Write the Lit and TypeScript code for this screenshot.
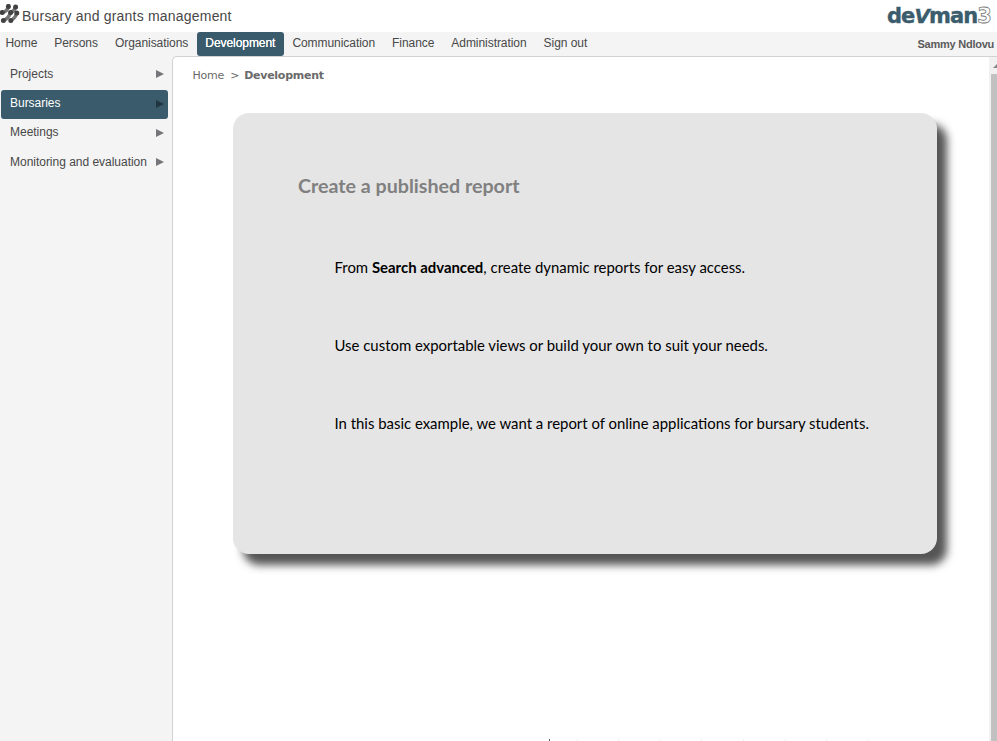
import { LitElement, html, css, svg } from "lit";
import { customElement, property } from "lit/decorators.js";
import { classMap } from "lit/directives/class-map.js";

@customElement("brand-mark")
class BrandMark extends LitElement {
  static styles = css`
    :host { display: block; width: 20px; height: 20px; }
    svg { display: block; }
    path { fill: none; stroke: #757575; stroke-width: 3.4; }
    circle { fill: #414141; }
  `;
  render() {
    const dots = [[8.4, 6.4], [15.6, 7], [2.2, 12.6], [10.6, 12.6], [16.8, 13], [3.4, 20.4], [10.8, 20.6]];
    const links = ["M8.4 6.4Q7.4 11.6 2.2 12.6", "M15.6 7Q14.4 11.2 10.6 12.6Q8.6 18.4 3.4 20.4", "M16.8 13Q15.6 17.8 10.8 20.6"];
    return html`<svg width="20" height="20" viewBox="0 4 20 20">
      ${links.map((d) => svg`<path d=${d} />`)}
      ${dots.map((d) => svg`<circle cx=${d[0]} cy=${d[1]} r="2.5"/>`)}
    </svg>`;
  }
}

@customElement("side-item")
class SideItem extends LitElement {
  @property() label = "";
  @property({ type: Boolean }) active = false;
  static styles = css`
    :host { display: block; }
    .row { display: flex; align-items: center; justify-content: space-between; box-sizing: border-box;
      height: 29.4px; margin: 0 4px 0 1px; padding: 0 4px 3px 9px; border-radius: 3px; color: #484848; letter-spacing: -.02px; }
    .active { background: #395b6b; color: #fff; }
    .arrow { width: 0; height: 0; margin-top: 1px; border: 4px solid transparent; border-left: 8px solid #77757a; border-right: 0; }
    .active .arrow { border-left-color: #203540; }
  `;
  render() {
    return html`<div class=${classMap({ row: true, active: this.active })}><span>${this.label}</span><span class="arrow"></span></div>`;
  }
}

@customElement("app-root")
class AppRoot extends LitElement {
  static styles = css`
    :host { display: flex; flex-direction: column; height: 741px; overflow: hidden; background: #f4f4f4;
      font: 12px "Liberation Sans", Arial, sans-serif; color: #484848; }
    .top { height: 32px; background: #fff; display: flex; justify-content: space-between; box-sizing: border-box; flex: none; }
    .title { display: flex; padding-top: 4px; gap: 2px; }
    .title span { font-size: 14px; letter-spacing: .2px; line-height: 24px; color: #484848; }
    .logo { font: bold 21px/32px "DejaVu Sans", sans-serif; letter-spacing: -.9px; color: #3a5c6c; padding-right: 6px; white-space: nowrap; -webkit-text-stroke: .4px #3a5c6c; }
    .vee { font-style: italic; font-size: 20px; }
    .three { color: #fff; -webkit-text-stroke: .8px #777; }
    .nav { height: 24px; flex: none; display: flex; justify-content: space-between; }
    .tabs { display: flex; margin-left: -3px; }
    .tab { padding: 0 8.5px; line-height: 22px; height: 24px; letter-spacing: -.055px; }
    .tab.on { background: #395b6b; color: #fff; border-radius: 3px; text-shadow: 0 0 .6px #fff; }
    .user { font-weight: bold; font-size: 11px; line-height: 24px; color: #5b5b5b; padding-right: 3px; letter-spacing: -.25px; }
    .main { display: flex; flex: 1; min-height: 0; }
    .side { width: 172px; flex: none; padding-top: 4.5px; }
    .page { flex: 1; display: flex; background: #fff; border: 1px solid #d2d2d2; border-width: 1px 0 0 1px; border-top-left-radius: 5px; overflow: hidden; }
    .content { flex: 1; display: flex; flex-direction: column; }
    .crumbs { font: 11px/14px "DejaVu Sans", Verdana, sans-serif; letter-spacing: -.2px; padding: 12px 0 0 19.5px; display: flex; gap: 6px; color: #6a6a6a; }
    .crumbs b { letter-spacing: -.27px; margin-left: -1px; }
    .card { margin: 30px 0 0 60px; width: 704px; height: 441px; box-sizing: border-box; padding: 61px 0 0 65px; border-radius: 16px;
      background: #e5e5e5; box-shadow: 10px 11px 9px #555; color: #000; font-family: Lato, Calibri, sans-serif; }
    h1 { margin: 0; font-size: 19.65px; line-height: 24px; color: #808080; font-weight: bold; white-space: nowrap; }
    p { margin: 0; padding-left: 36.5px; font-size: 14.91px; line-height: 20px; white-space: nowrap; }
    .p1 { margin-top: 59px; }
    .p2, .p3 { margin-top: 58px; }
    .cut { margin-top: auto; margin-left: 376px; height: 2px; display: flex; gap: 40.6px; }
    .cut i { width: 1px; height: 2px; background: #f0f0f0; }
    .cut i:first-child { background: #666; margin-right: -14px; }
    .scroll { width: 8px; background: linear-gradient(90deg, #f1f1f1 2px, #c1c1c1 2px); }
    .button { height: 17px; background: #f1f1f1; display: flex; justify-content: flex-end; align-items: center; }
    .button span { border-bottom: 4px solid #888; border-left: 4px solid transparent; }
  `;
  render() {
    const tabs = ["Home", "Persons", "Organisations", "Development", "Communication", "Finance", "Administration", "Sign out"];
    const side = ["Projects", "Bursaries", "Meetings", "Monitoring and evaluation"];
    return html`
      <header class="top">
        <div class="title"><brand-mark></brand-mark><span>Bursary and grants management</span></div>
        <div class="logo">de<span class="vee">V</span>man<span class="three">3</span></div>
      </header>
      <nav class="nav">
        <div class="tabs">${tabs.map((t) => html`<span class=${classMap({ tab: true, on: t === "Development" })}>${t}</span>`)}</div>
        <span class="user">Sammy Ndlovu</span>
      </nav>
      <div class="main">
        <aside class="side">${side.map((s) => html`<side-item .label=${s} .active=${s === "Bursaries"}></side-item>`)}</aside>
        <main class="page">
          <div class="content">
            <div class="crumbs"><span>Home</span><span>&gt;</span><b>Development</b></div>
            <section class="card">
              <h1>Create a published report</h1>
              <p class="p1">From <b>Search advanced</b>, create dynamic reports for easy access.</p>
              <p class="p2">Use custom exportable views or build your own to suit your needs.</p>
              <p class="p3">In this basic example, we want a report of online applications for bursary students.</p>
            </section>
            <div class="cut">${Array.from({ length: 9 }, () => html`<i></i>`)}</div>
          </div>
          <div class="scroll"><div class="button"><span></span></div></div>
        </main>
      </div>`;
  }
}
